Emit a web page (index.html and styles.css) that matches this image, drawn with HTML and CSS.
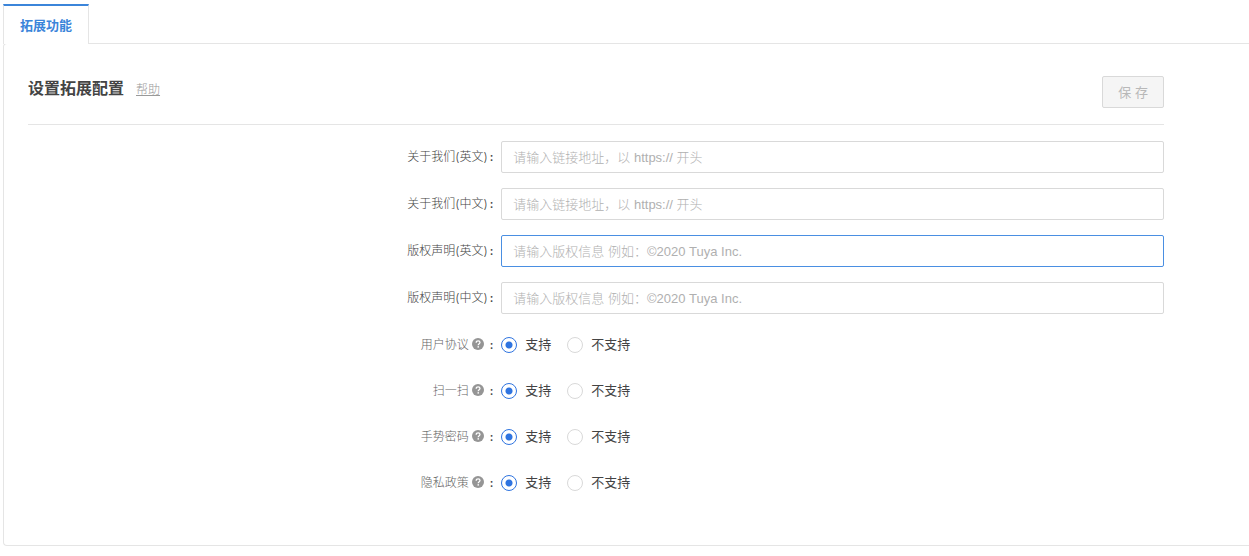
FILE: index.html
```html
<!DOCTYPE html>
<html lang="zh-CN">
<head>
<meta charset="utf-8">
<title>拓展功能</title>
<link rel="stylesheet" href="styles.css">
</head>
<body>
<svg class="sprite" aria-hidden="true">
  <symbol id="help" viewBox="0 0 12 12">
    <circle cx="6" cy="6" r="6" fill="#959595"/>
    <path d="M4.2 4.7C4.2 3.5 5 2.8 6.1 2.8s1.9.7 1.9 1.7C8 5.7 6.2 5.7 6.2 7.2" fill="none" stroke="#fff" stroke-width="1.3"/>
    <circle cx="6.2" cy="8.9" r=".8" fill="#fff"/>
  </symbol>
</svg>
<div class="page">
  <nav class="tabs"><button type="button" class="tab">拓展功能</button></nav>
  <main class="panel">
    <header class="panel-header">
      <h1 class="title">设置拓展配置</h1>
      <a class="help-link" href="#">帮助</a>
      <button type="button" class="save" disabled>保 存</button>
    </header>
    <form class="form">
      <div class="row">
        <label class="label" for="about-en">关于我们(英文)<span class="colon">:</span></label>
        <input class="input" id="about-en" type="text" placeholder="请输入链接地址，以 https:// 开头">
      </div>
      <div class="row">
        <label class="label" for="about-zh">关于我们(中文)<span class="colon">:</span></label>
        <input class="input" id="about-zh" type="text" placeholder="请输入链接地址，以 https:// 开头">
      </div>
      <div class="row">
        <label class="label" for="copy-en">版权声明(英文)<span class="colon">:</span></label>
        <input class="input input-active" id="copy-en" type="text" placeholder="请输入版权信息 例如：©2020 Tuya Inc.">
      </div>
      <div class="row">
        <label class="label" for="copy-zh">版权声明(中文)<span class="colon">:</span></label>
        <input class="input" id="copy-zh" type="text" placeholder="请输入版权信息 例如：©2020 Tuya Inc.">
      </div>
      <div class="row" role="radiogroup" aria-labelledby="l-user">
        <span class="label label-light" id="l-user">用户协议<svg class="help-icon"><use href="#help"/></svg><span class="colon">:</span></span>
        <div class="options">
          <label class="option"><input class="radio" type="radio" name="user" checked>支持</label>
          <label class="option"><input class="radio" type="radio" name="user">不支持</label>
        </div>
      </div>
      <div class="row" role="radiogroup" aria-labelledby="l-scan">
        <span class="label label-light" id="l-scan">扫一扫<svg class="help-icon"><use href="#help"/></svg><span class="colon">:</span></span>
        <div class="options">
          <label class="option"><input class="radio" type="radio" name="scan" checked>支持</label>
          <label class="option"><input class="radio" type="radio" name="scan">不支持</label>
        </div>
      </div>
      <div class="row" role="radiogroup" aria-labelledby="l-gesture">
        <span class="label label-light" id="l-gesture">手势密码<svg class="help-icon"><use href="#help"/></svg><span class="colon">:</span></span>
        <div class="options">
          <label class="option"><input class="radio" type="radio" name="gesture" checked>支持</label>
          <label class="option"><input class="radio" type="radio" name="gesture">不支持</label>
        </div>
      </div>
      <div class="row" role="radiogroup" aria-labelledby="l-privacy">
        <span class="label label-light" id="l-privacy">隐私政策<svg class="help-icon"><use href="#help"/></svg><span class="colon">:</span></span>
        <div class="options">
          <label class="option"><input class="radio" type="radio" name="privacy" checked>支持</label>
          <label class="option"><input class="radio" type="radio" name="privacy">不支持</label>
        </div>
      </div>
    </form>
  </main>
</div>
</body>
</html>
```

FILE: styles.css
```css
* { box-sizing: border-box; }

body {
  margin: 0;
  background: #fff;
  color: #444;
  font: 13px/20px Inter, "Noto Sans CJK SC", sans-serif;
}

button, input { font: inherit; }

.sprite { display: none; }

.page { padding: 4px 0 10px 3px; }

.tabs { display: flex; }

.tab {
  position: relative;
  height: 40px;
  margin-bottom: -1px;
  padding: 0 16px;
  border: 1px solid #e5e5e5;
  border-top: 2px solid #3b85da;
  border-bottom: 0;
  background: #fff;
  color: #3b85da;
  font-weight: 700;
}

.panel {
  padding: 32px 85px 47px 24px;
  border: 1px solid #e5e5e5;
  border-right: 0;
  border-radius: 4px 0 0 4px;
}

.panel-header {
  display: flex;
  align-items: flex-start;
  gap: 12px;
  padding-bottom: 16px;
  border-bottom: 1px solid #e5e5e5;
}

.title {
  margin: 0;
  font-size: 16px;
  line-height: 24px;
  font-weight: 700;
}

.help-link {
  color: #999;
  font-size: 12px;
  line-height: 28px;
  font-weight: 300;
}

.save {
  height: 32px;
  margin-left: auto;
  padding: 0 15px;
  border: 1px solid #d9d9d9;
  border-radius: 2px;
  background: #f5f5f5;
  color: #b8b8b8;
}

.form {
  display: grid;
  gap: 15px;
  padding-top: 16px;
}

.row {
  display: grid;
  grid-template-columns: 10fr 14fr;
  align-items: center;
}

.label {
  display: flex;
  justify-content: flex-end;
  align-items: center;
  padding-right: 8px;
  color: #444;
  font-size: 12px;
  font-weight: 300;
}

.label-light { color: #666; }

.colon {
  margin-left: 2px;
  color: #444;
  font-weight: 500;
}

.help-icon {
  width: 12px;
  height: 12px;
  margin: 0 4px 2px 3px;
}

.input {
  width: 100%;
  height: 32px;
  padding: 0 11px;
  border: 1px solid #d9d9d9;
  border-radius: 2px;
  outline: 0;
  background: #fff;
  color: #444;
  font-family: "Liberation Sans", "Noto Sans CJK SC", sans-serif;
}

.input::placeholder {
  color: #b0b0b0;
  font-weight: 300;
  opacity: 1;
}

.input-active, .input:focus { border-color: #4a8fe2; }

.options {
  display: flex;
  align-items: center;
  gap: 16px;
  height: 31px;
}

.option {
  display: flex;
  align-items: center;
  gap: 8px;
  line-height: 19px;
}

.radio {
  appearance: none;
  width: 16px;
  height: 16px;
  margin: 0;
  border: 1px solid #d9d9d9;
  border-radius: 50%;
  background: #fff;
}

.radio:checked {
  border-color: #2f74e0;
  background: radial-gradient(circle, #2f74e0 0 3px, #fff 4px);
}
```
